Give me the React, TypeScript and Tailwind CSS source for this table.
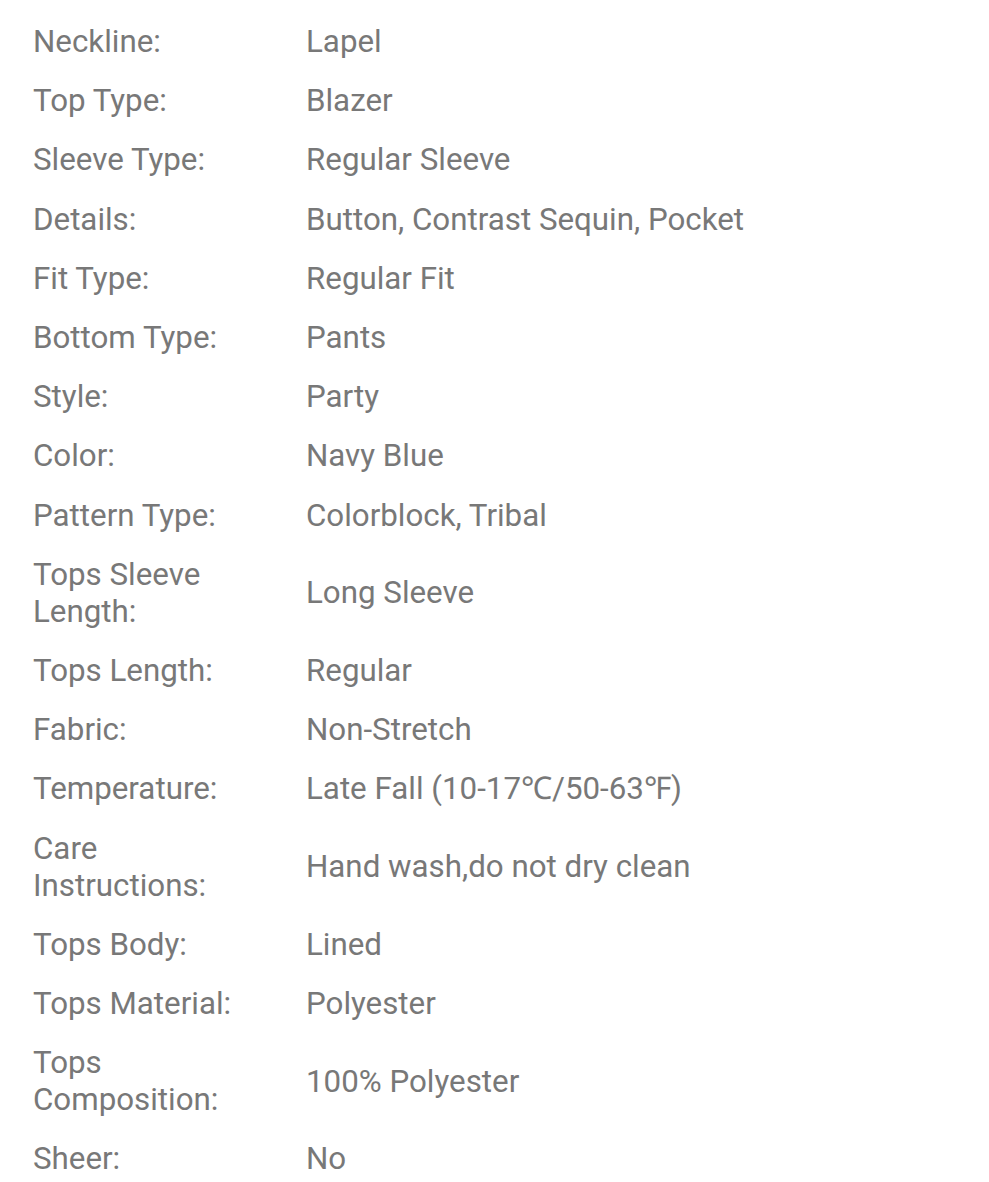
const rows: [string, string][] = [
  ['Neckline:', 'Lapel'],
  ['Top Type:', 'Blazer'],
  ['Sleeve Type:', 'Regular Sleeve'],
  ['Details:', 'Button, Contrast Sequin, Pocket'],
  ['Fit Type:', 'Regular Fit'],
  ['Bottom Type:', 'Pants'],
  ['Style:', 'Party'],
  ['Color:', 'Navy Blue'],
  ['Pattern Type:', 'Colorblock, Tribal'],
  ['Tops Sleeve Length:', 'Long Sleeve'],
  ['Tops Length:', 'Regular'],
  ['Fabric:', 'Non-Stretch'],
  ['Temperature:', 'Late Fall (10-17℃/50-63℉)'],
  ['Care Instructions:', 'Hand wash,do not dry clean'],
  ['Tops Body:', 'Lined'],
  ['Tops Material:', 'Polyester'],
  ['Tops Composition:', '100% Polyester'],
  ['Sheer:', 'No'],
];

export default function App() {
  return (
    <div className="min-h-screen bg-white pt-3 font-['Roboto',sans-serif] text-[31.3px] leading-[37px] text-[#787878]">
      {rows.map(([label, value]) => (
        <div key={label} className="flex items-center py-[11.1px]">
          <div className="w-[306px] shrink-0 pl-[33px] pr-[46px]">{label}</div>
          <div className="flex-1">{value}</div>
        </div>
      ))}
    </div>
  );
}
